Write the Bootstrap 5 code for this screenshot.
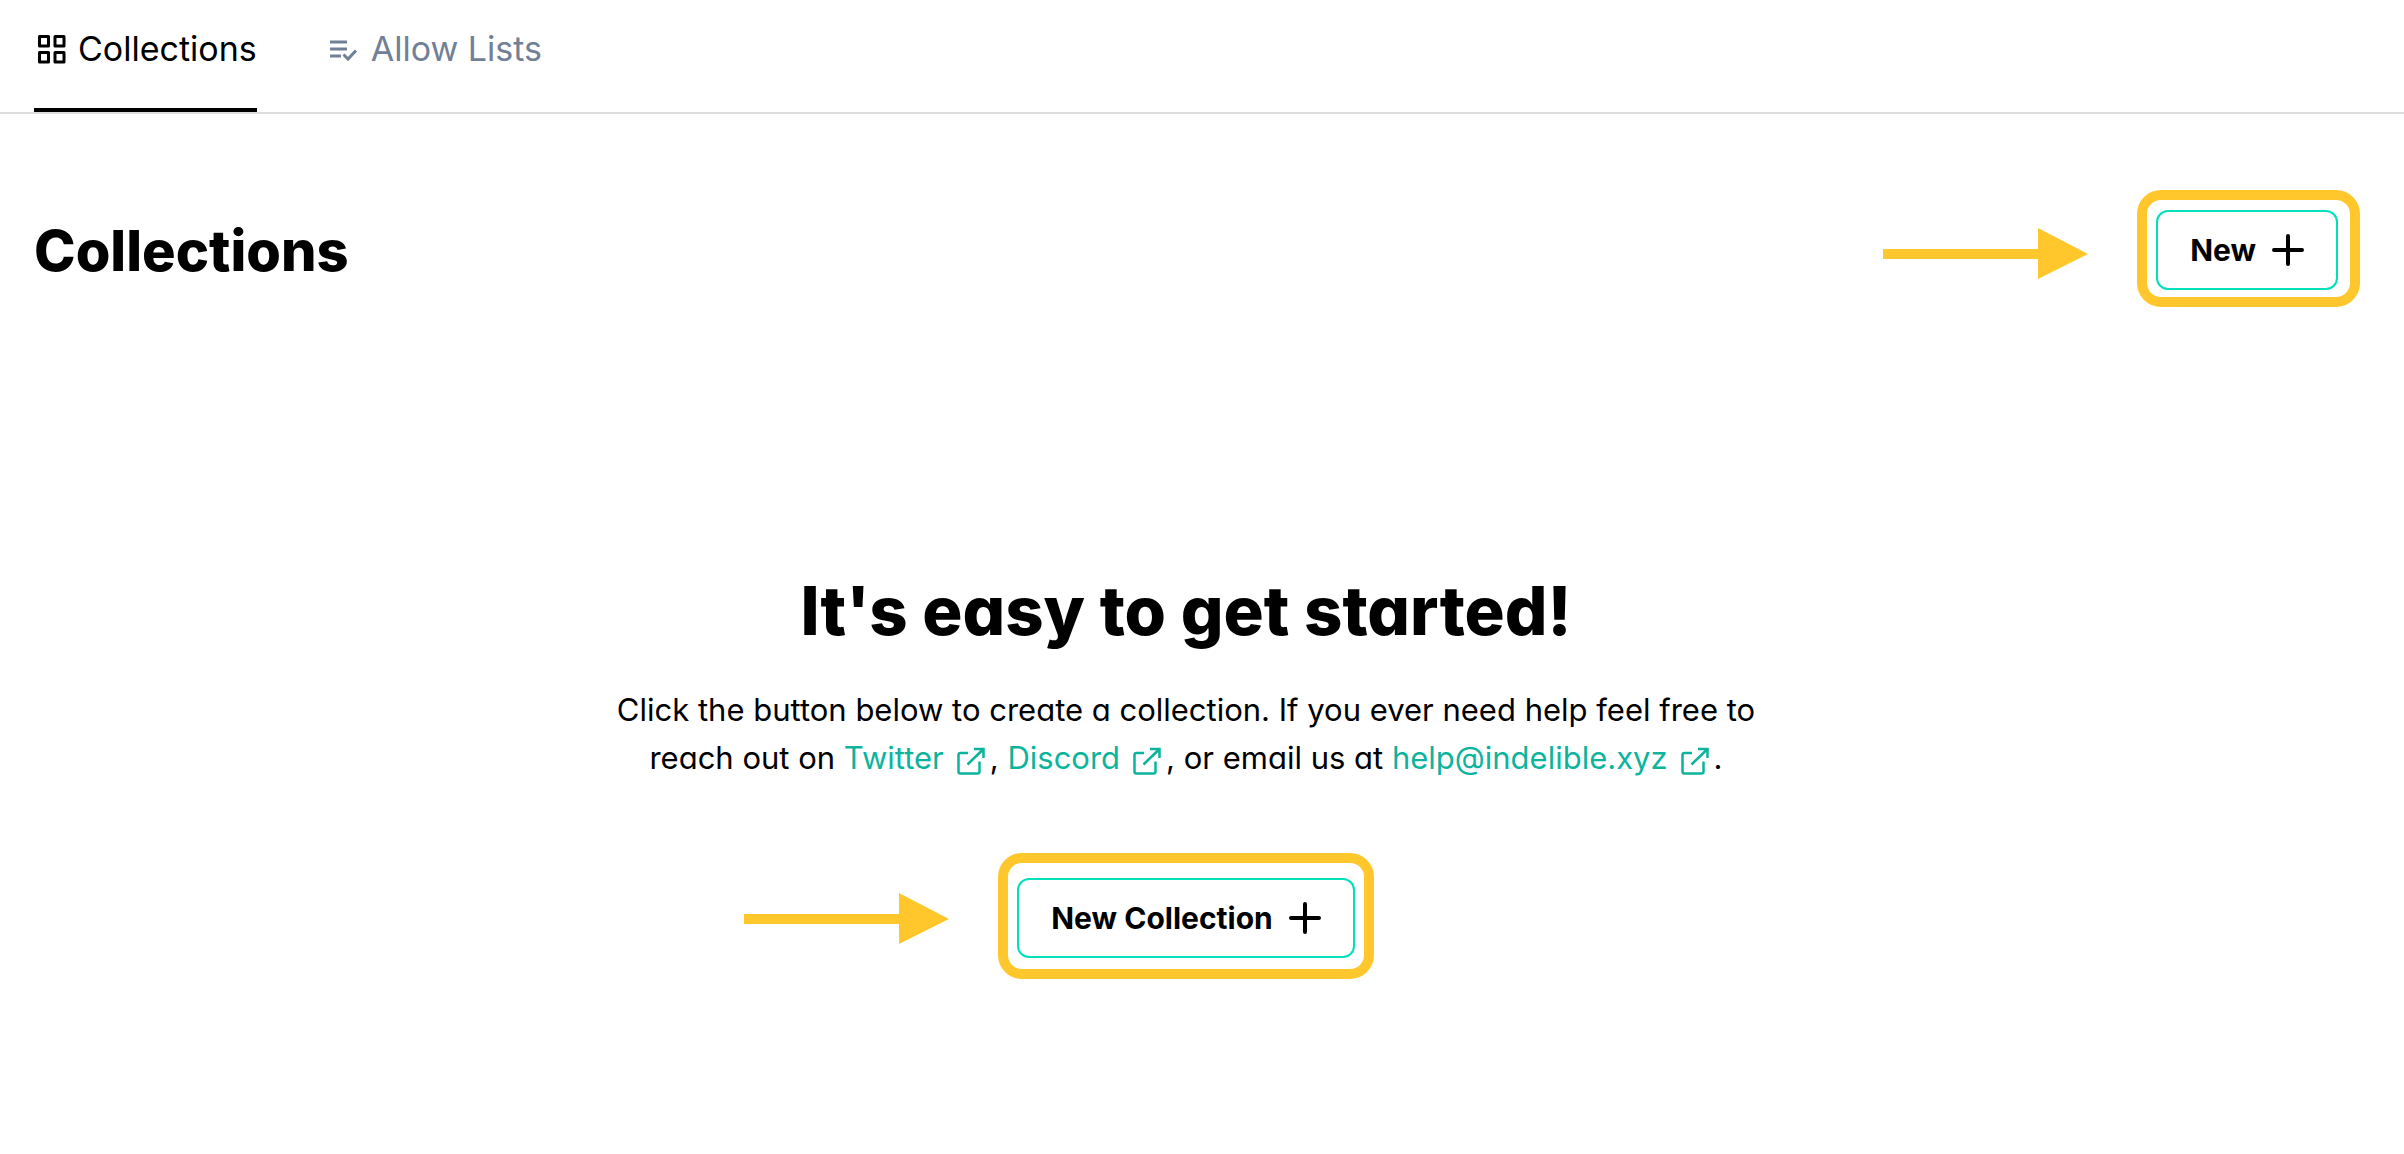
<!DOCTYPE html>
<html lang="en">
<head>
<meta charset="utf-8">
<meta name="viewport" content="width=device-width, initial-scale=1">
<title>Collections</title>
<link href="https://cdn.jsdelivr.net/npm/bootstrap@5.3.0/dist/css/bootstrap.min.css" rel="stylesheet">
<style>
  body { font-family: Inter, "Liberation Sans", sans-serif; font-feature-settings: "cv11"; color: #000; background: #fff; }
  .tab-bar { border-bottom: 2px solid #ddd; padding: 0 34px; gap: 70px; }
  .tab-bar .nav-link { display: flex; align-items: center; gap: 12px; height: 112px; padding: 0 0 11px; font-size: 34px; line-height: 40px; color: #718096; border-bottom: 4px solid transparent; }
  .tab-bar .nav-link.active { color: #000; border-color: #000; }
  .tab-icon { width: 32px; height: 32px; flex: none; }
  .page-head { padding: 76px 44px 0 34px; }
  .page-title { font-size: 56px; line-height: 64px; font-weight: 800; padding-top: 4px; }
  .callout { position: relative; border: 10px solid #ffc72c; border-radius: 24px; }
  .callout-head { padding: 10px 12px 7px 9px; }
  .callout-main { padding: 15px 9px 11px; }
  .callout-arrow { position: absolute; top: 28px; right: calc(100% + 59px); width: 205px; height: 52px; }
  .callout-main .callout-arrow { top: 30px; }
  .btn-new { display: flex; align-items: center; gap: 16px; height: 80px; padding: 0 32px; border: 2px solid #00e0bb; border-radius: 12px; font-size: 30px; line-height: 40px; font-weight: 700; color: #000; }
  .btn-new:hover { border-color: #0db49d; color: #000; }
  .starter { padding: 264px 66px 72px 34px; }
  .starter h2 { font-size: 67px; line-height: 80px; font-weight: 800; margin-bottom: 35px; }
  .starter p { max-width: 1180px; font-size: 31px; line-height: 48px; margin-bottom: 71px; }
  .starter p a { color: #0db49d; text-decoration: none; }
  .ext-icon { width: 28px; height: 28px; margin: 0 5px 0 13px; vertical-align: -6px; }
</style>
<script src="https://cdn.jsdelivr.net/npm/bootstrap@5.3.0/dist/js/bootstrap.bundle.min.js"></script>
</head>
<body>
<svg class="d-none" aria-hidden="true">
  <symbol id="plus" viewBox="0 0 32 32"><path d="M16 2v28M2 16h28" fill="none" stroke="#000" stroke-width="4" stroke-linecap="round"/></symbol>
  <symbol id="ext" viewBox="0 0 28 28"><path d="M11 6H3.500Q1.500 6 1.500 8V24.500Q1.500 26.500 3.500 26.500H20.500Q22.500 26.500 22.500 24.500V14.500M17 2H26.500V11M26 2.500L10.500 17.500" fill="none" stroke="currentColor" stroke-width="2.500"/></symbol>
  <symbol id="arrow" viewBox="0 0 205 52"><path d="M0 21H155V0L205 26L155 51V31H0Z" fill="#ffc72c"/></symbol>
</svg>

<nav class="nav flex-nowrap tab-bar" aria-label="Sections">
  <a class="nav-link active" aria-current="page" href="#collections">
    <svg class="tab-icon" viewBox="0 0 32 32" aria-hidden="true"><g fill="none" stroke="currentColor" stroke-width="3" stroke-linejoin="round"><path d="M5.500 3.500h9v9.500h-9zM21 3.500h9v9.500h-9zM5.500 19.500h9v9.500h-9zM21 19.500h9v9.500h-9z"/></g></svg>
    Collections
  </a>
  <a class="nav-link" href="#allow-lists">
    <svg class="tab-icon" viewBox="0 0 32 32" aria-hidden="true"><path d="M3 9h17M3 16h17M3 23h11M16.500 21.500l4.500 4.500l8-8.500" fill="none" stroke="currentColor" stroke-width="3"/></svg>
    Allow Lists
  </a>
</nav>

<main>
  <header class="page-head d-flex justify-content-between align-items-center">
    <h1 class="page-title mb-0" id="collections">Collections</h1>
    <div class="callout callout-head">
      <svg class="callout-arrow" aria-hidden="true"><use href="#arrow"/></svg>
      <button type="button" class="btn btn-new">New <svg width="32" height="32" aria-hidden="true"><use href="#plus"/></svg></button>
    </div>
  </header>

  <section class="starter d-flex flex-column align-items-center text-center">
    <h2>It's easy to get started!</h2>
    <p>Click the button below to create a collection. If you ever need help feel free to reach out on
      <a href="#twitter">Twitter<svg class="ext-icon" aria-hidden="true"><use href="#ext"/></svg></a>,
      <a href="#discord">Discord<svg class="ext-icon" aria-hidden="true"><use href="#ext"/></svg></a>,
      or email us at
      <a href="mailto:help@indelible.xyz">help@indelible.xyz<svg class="ext-icon" aria-hidden="true"><use href="#ext"/></svg></a>.</p>
    <div class="callout callout-main">
      <svg class="callout-arrow" aria-hidden="true"><use href="#arrow"/></svg>
      <button type="button" class="btn btn-new">New Collection <svg width="32" height="32" aria-hidden="true"><use href="#plus"/></svg></button>
    </div>
  </section>
</main>
</body>
</html>
